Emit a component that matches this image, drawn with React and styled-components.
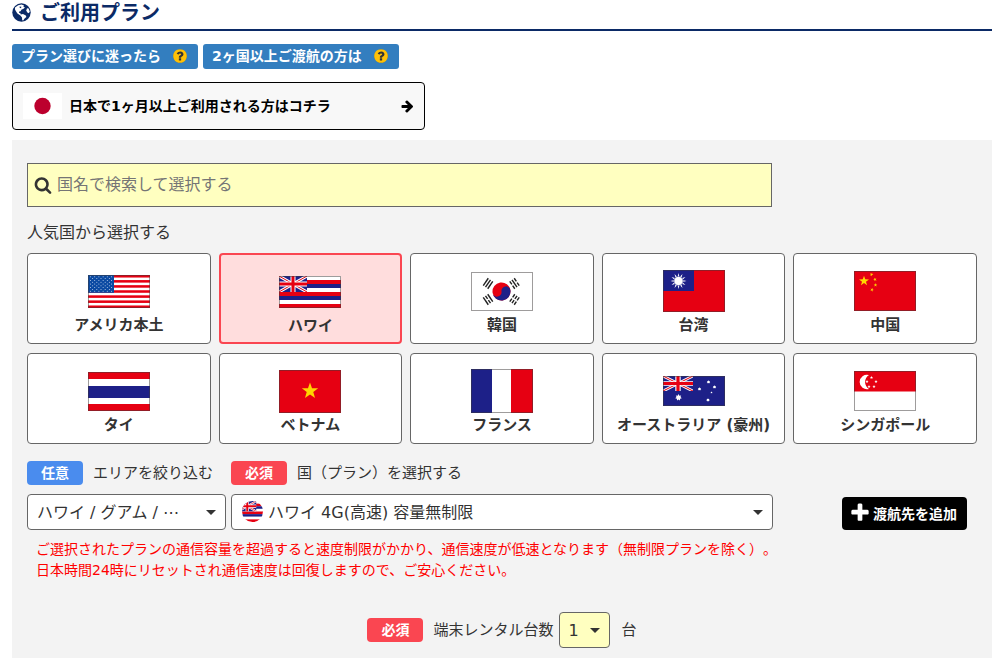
import React, { useState } from 'react';
import styled, { createGlobalStyle } from 'styled-components';

const NAVY = '#0b2a66';
const RED = '#e60012';
const BLUE = '#1d2088';

const points = (cx, cy, outer, inner, count, turn = 0) => {
  const list = [];
  for (let i = 0; i < count * 2; i++) {
    const r = i % 2 ? inner : outer;
    const a = (Math.PI * i) / count - Math.PI / 2 + turn;
    list.push(`${(cx + r * Math.cos(a)).toFixed(2)},${(cy + r * Math.sin(a)).toFixed(2)}`);
  }
  return list.join(' ');
};

function Star({ x, y, r, inner = 0.4, count = 5, turn, fill = '#fff' }) {
  return <polygon points={points(x, y, r, r * inner, count, turn)} fill={fill} />;
}

function UnionJack({ width, height }) {
  return (
    <svg width={width} height={height} viewBox="0 0 28 16" preserveAspectRatio="none">
      <rect width="28" height="16" fill={BLUE} />
      <path d="M0 0L28 16M28 0L0 16" stroke="#fff" strokeWidth="3" />
      <path d="M0 0L28 16M28 0L0 16" stroke={RED} strokeWidth="1" />
      <path d="M14 0V16M0 8H28" stroke="#fff" strokeWidth="5" />
      <path d="M14 0V16M0 8H28" stroke={RED} strokeWidth="3" />
    </svg>
  );
}

function Trigram({ x, y, angle, broken }) {
  return (
    <g transform={`translate(${x} ${y}) rotate(${angle})`} stroke="#222" strokeWidth="1.4">
      {[-2.7, 0, 2.7].map((dy, i) => (
        <path
          key={dy}
          d={broken[i] ? `M-4.5 ${dy}H-.7M.7 ${dy}H4.5` : `M-4.5 ${dy}H4.5`}
        />
      ))}
    </g>
  );
}

function HawaiiStripes() {
  const colors = ['#fff', RED, BLUE, '#fff', RED, BLUE, '#fff', RED];
  return (
    <>
      {colors.map((color, i) => (
        <rect key={i} y={i * 4} width="62" height="4" fill={color} />
      ))}
      <UnionJack width="28" height="16" />
    </>
  );
}

const flags = {
  usa: {
    height: 33,
    art: (
      <>
        <rect width="62" height="33" fill="#fff" />
        {[0, 1, 2, 3, 4, 5, 6].map(i => (
          <rect key={i} y={i * 5.08} width="62" height="2.54" fill={RED} />
        ))}
        <rect width="26" height="17.8" fill="#0b4aa2" />
        {[0, 1, 2, 3, 4, 5, 6, 7, 8].map(row =>
          (row % 2 ? [0, 1, 2, 3, 4] : [0, 1, 2, 3, 4, 5]).map(col => (
            <circle
              key={`${row}-${col}`}
              cx={2.5 + col * 4.2 + (row % 2) * 2.1}
              cy={1.8 + row * 1.8}
              r=".5"
              fill="#c8d8ee"
            />
          ))
        )}
      </>
    ),
  },
  hawaii: { height: 32, art: <HawaiiStripes /> },
  korea: {
    height: 39,
    art: (
      <>
        <rect width="62" height="39" fill="#fff" />
        <g transform="translate(30.5 19.5) rotate(-8)">
          <circle r="9" fill={RED} />
          <path d="M-9 0A4.5 4.5 0 0 0 0 0A4.5 4.5 0 0 1 9 0A9 9 0 0 1 -9 0Z" fill={BLUE} />
        </g>
        <Trigram x="17" y="11.5" angle={-56} broken={[0, 0, 0]} />
        <Trigram x="43.5" y="11.5" angle={56} broken={[1, 0, 1]} />
        <Trigram x="17" y="27.5" angle={56} broken={[0, 1, 0]} />
        <Trigram x="43.5" y="27.5" angle={-56} broken={[1, 1, 1]} />
      </>
    ),
  },
  taiwan: {
    height: 42,
    art: (
      <>
        <rect width="62" height="42" fill={RED} />
        <rect width="31" height="21" fill={BLUE} />
        <Star x={15.5} y={11} r={8} inner={0.5} count={12} />
        <circle cx="15.5" cy="11" r="4.6" fill="#fff" stroke={BLUE} strokeWidth=".6" />
      </>
    ),
  },
  china: {
    height: 40,
    art: (
      <>
        <rect width="62" height="40" fill={RED} />
        <Star x={10} y={10} r={5.2} fill="#ffd900" />
        <Star x={17.5} y={3.5} r={1.9} turn={0.4} fill="#ffd900" />
        <Star x={21} y={8.5} r={1.9} turn={0.8} fill="#ffd900" />
        <Star x={21.5} y={14} r={1.9} fill="#ffd900" />
        <Star x={18} y={18.8} r={1.9} turn={0.4} fill="#ffd900" />
      </>
    ),
  },
  thailand: {
    height: 39,
    art: (
      <>
        <rect width="62" height="39" fill={RED} />
        <rect y="7" width="62" height="25" fill="#fff" />
        <rect y="14" width="62" height="12" fill={BLUE} />
      </>
    ),
  },
  vietnam: {
    height: 43,
    art: (
      <>
        <rect width="62" height="43" fill={RED} />
        <Star x={31} y={21} r={8.6} fill="#ffd400" />
      </>
    ),
  },
  france: {
    height: 44,
    art: (
      <>
        <rect width="62" height="44" fill="#fff" />
        <rect width="21" height="44" fill={BLUE} />
        <rect x="40" width="22" height="44" fill={RED} />
      </>
    ),
  },
  australia: {
    height: 30,
    art: (
      <>
        <rect width="62" height="30" fill={BLUE} />
        <UnionJack width="30" height="15" />
        <Star x={15.5} y={21.5} r={3.4} inner={0.6} count={7} />
        <Star x={36.5} y={13} r={1.8} inner={0.6} count={7} />
        <Star x={45.5} y={6} r={1.8} inner={0.6} count={7} />
        <Star x={51.5} y={11} r={1.8} inner={0.6} count={7} />
        <Star x={48.5} y={16.5} r={1.2} />
        <Star x={45} y={24} r={1.8} inner={0.6} count={7} />
      </>
    ),
  },
  singapore: {
    height: 40,
    art: (
      <>
        <rect width="62" height="40" fill="#fff" />
        <rect width="62" height="20.5" fill={RED} />
        <path d="M15 4A7.3 7.3 0 1 0 15 18A8.2 8.2 0 0 1 15 4Z" fill="#fff" />
        <Star x={17.5} y={6.5} r={1.7} />
        <Star x={13} y={10.5} r={1.7} />
        <Star x={22} y={10.5} r={1.7} />
        <Star x={15} y={15.5} r={1.7} />
        <Star x={20} y={15.5} r={1.7} />
      </>
    ),
  },
};

const countries = [
  { id: 'usa', name: 'アメリカ本土' },
  { id: 'hawaii', name: 'ハワイ' },
  { id: 'korea', name: '韓国' },
  { id: 'taiwan', name: '台湾' },
  { id: 'china', name: '中国' },
  { id: 'thailand', name: 'タイ' },
  { id: 'vietnam', name: 'ベトナム' },
  { id: 'france', name: 'フランス' },
  { id: 'australia', name: 'オーストラリア (豪州)' },
  { id: 'singapore', name: 'シンガポール' },
];

const icons = {
  search: 'M1216 832q0-185-131.5-316.5t-316.5-131.5-316.5 131.5-131.5 316.5 131.5 316.5 316.5 131.5 316.5-131.5 131.5-316.5zm512 832q0 52-38 90t-90 38q-54 0-90-38l-343-342q-179 124-399 124-143 0-273.5-55.5t-225-150-150-225-55.5-273.5 55.5-273.5 150-225 225-150 273.5-55.5 273.5 55.5 225 150 150 225 55.5 273.5q0 220-124 399l343 343q37 37 37 90z',
  plus: 'M1600 736v192q0 40-28 68t-68 28h-416v416q0 40-28 68t-68 28h-192q-40 0-68-28t-28-68v-416h-416q-40 0-68-28t-28-68v-192q0-40 28-68t68-28h416v-416q0-40 28-68t68-28h192q40 0 68 28t28 68v416h416q40 0 68 28t28 68z',
  question: 'M1024 1376v-192q0-14-9-23t-23-9h-192q-14 0-23 9t-9 23v192q0 14 9 23t23 9h192q14 0 23-9t9-23zm256-672q0-88-55.5-163t-138.5-116-170-41q-243 0-371 213-15 24 8 42l132 100q7 6 19 6 16 0 25-12 53-68 86-92 34-24 86-24 48 0 85.5 26t37.5 59q0 38-20 61t-68 45q-63 28-115.5 86.5t-52.5 125.5v36q0 14 9 23t23 9h192q14 0 23-9t9-23q0-19 21.5-49.5t54.5-49.5q32-18 49-28.5t46-35 44.5-48 28-60.5 12.5-81zm384 192q0 209-103 385.5t-279.5 279.5-385.5 103-385.5-103-279.5-279.5-103-385.5 103-385.5 279.5-279.5 385.5-103 385.5 103 279.5 279.5 103 385.5z',
  arrow: 'M1664 960q0 54-37 91l-651 651q-39 37-91 37-51 0-90-37l-75-75q-38-38-38-91t38-91l293-293h-704q-52 0-84.5-37.5t-32.5-90.5v-128q0-53 32.5-90.5t84.5-37.5h704l-293-294q-38-36-38-90t38-90l75-75q38-38 90-38 53 0 91 38l651 651q37 35 37 90z',
};

function Icon({ name, size, className }) {
  return (
    <svg className={className} width={size} height={size} viewBox="0 0 1792 1792" fill="currentColor" aria-hidden="true">
      <path d={icons[name]} />
    </svg>
  );
}

function Globe() {
  return (
    <svg width="19" height="19" viewBox="0 0 19 19" aria-hidden="true">
      <circle cx="9.5" cy="9.5" r="9.2" fill="currentColor" />
      <g fill="#fff">
        <path d="M3 4.6L6.2 2.2L9.6 1.6L12 2.4L11.4 3.8L13 4.6L11.2 6L9.6 6.6L8.6 8.2L7.2 8.4L7 9.8L8.4 10.2L8.8 11.4L11 11L13.8 12.6L14.4 14L12.6 15.6L11.2 17.4L10.2 17.2L10 14.4L8.4 12.4L5.4 10.4L3.8 8L3 6.4Z" />
        <path d="M15 5.2L16.6 5.4L17.8 8.6L16.8 10.2L15 9.2L14.4 7.2Z" />
      </g>
      <path d="M7.6 3.4L9.4 3.8L9 5.2L7.6 4.8Z" fill="currentColor" />
    </svg>
  );
}

function HelpIcon() {
  return (
    <svg width="16" height="16" viewBox="0 0 1792 1792" aria-hidden="true">
      <circle cx="896" cy="896" r="740" fill="#333" />
      <path d={icons.question} fill="#ffc107" />
    </svg>
  );
}

function Flag({ id }) {
  const { height, art } = flags[id];
  return (
    <svg width="62" height={height} viewBox={`0 0 62 ${height}`} aria-hidden="true">
      {art}
      <rect x=".5" y=".5" width="61" height={height - 1} fill="none" stroke="#3e3a39" strokeOpacity=".5" />
    </svg>
  );
}

function App() {
  const [selected, setSelected] = useState('hawaii');

  return (
    <Page>
      <GlobalStyle />
      <Heading>
        <Globe />
        ご利用プラン
      </Heading>
      <HelpLinks>
        <HelpLink href="#">プラン選びに迷ったら<HelpIcon /></HelpLink>
        <HelpLink href="#">2ヶ国以上ご渡航の方は<HelpIcon /></HelpLink>
      </HelpLinks>
      <JapanLink href="#">
        <svg width="39" height="26" viewBox="0 0 39 26" aria-hidden="true">
          <rect width="39" height="26" fill="#fff" />
          <circle cx="19.5" cy="13" r="8.2" fill="#bc002d" />
        </svg>
        <span>日本で1ヶ月以上ご利用される方はコチラ</span>
        <Icon name="arrow" size={14} />
      </JapanLink>

      <Panel>
        <SearchBox>
          <Icon name="search" size={18} />
          <input type="text" aria-label="国名で検索して選択する" placeholder="国名で検索して選択する" />
        </SearchBox>
        <Lead>人気国から選択する</Lead>
        <Countries>
          {countries.map(country => (
            <Country
              key={country.id}
              type="button"
              $active={country.id === selected}
              aria-pressed={country.id === selected}
              onClick={() => setSelected(country.id)}
            >
              <FlagSlot><Flag id={country.id} /></FlagSlot>
              {country.name}
            </Country>
          ))}
        </Countries>

        <PlanRow>
          <AreaField>
            <FieldLabel htmlFor="area"><Badge $optional>任意</Badge>エリアを絞り込む</FieldLabel>
            <SelectWrap>
              <Select id="area">
                <option>ハワイ / グアム / ⋯</option>
              </Select>
              <Caret />
            </SelectWrap>
          </AreaField>
          <PlanField>
            <FieldLabel htmlFor="plan"><Badge>必須</Badge>国（プラン）を選択する</FieldLabel>
            <SelectWrap>
              <Select id="plan" $withFlag>
                <option>ハワイ 4G(高速) 容量無制限</option>
              </Select>
              <RoundFlag width="21" height="21" viewBox="6 0 32 32" aria-hidden="true">
                <HawaiiStripes />
              </RoundFlag>
              <Caret />
            </SelectWrap>
          </PlanField>
          <AddButton type="button"><Icon name="plus" size={22} />渡航先を追加</AddButton>
        </PlanRow>

        <Notice>
          ご選択されたプランの通信容量を超過すると速度制限がかかり、通信速度が低速となります（無制限プランを除く）。<br />
          日本時間24時にリセットされ通信速度は回復しますので、ご安心ください。
        </Notice>

        <CountRow>
          <CountLabel htmlFor="count"><Badge>必須</Badge>端末レンタル台数</CountLabel>
          <CountWrap>
            <Select id="count" $yellow>
              <option>1</option>
              <option>2</option>
              <option>3</option>
            </Select>
            <Caret />
          </CountWrap>
          <span>台</span>
        </CountRow>
      </Panel>
    </Page>
  )
}

function Caret() {
  return (
    <CaretIcon width="10" height="5" viewBox="0 0 10 5" aria-hidden="true">
      <path d="M0 0H10L5 5Z" fill="currentColor" />
    </CaretIcon>
  );
}

export default App

const GlobalStyle = createGlobalStyle`
  * {
    box-sizing: border-box;
  }

  body {
    margin: 0;
    background: #fff;
    color: #333;
    font-family: "DejaVu Sans", "Noto Sans CJK JP", sans-serif;
    font-size: 15px;
    line-height: 22px;
    text-spacing-trim: space-all;
  }

  button, input, select {
    font-family: inherit;
    color: inherit;
  }

  svg {
    flex: none;
  }
`;

const Page = styled.main`
  padding: 0 10px 12px 12px;
`;

const Heading = styled.h1`
  display: flex;
  align-items: center;
  gap: 9px;
  margin: 0;
  height: 31px;
  padding-bottom: 4px;
  border-bottom: 2px solid ${NAVY};
  color: ${NAVY};
  font-size: 20px;
  line-height: 24px;
`;

const HelpLinks = styled.div`
  display: flex;
  gap: 5px;
  margin: 13px 0;
`;

const HelpLink = styled.a`
  display: flex;
  align-items: center;
  gap: 11px;
  height: 25px;
  padding: 0 10px 1px 9px;
  border-radius: 3px;
  background: #337ebf;
  color: #fff;
  font-size: 14px;
  font-weight: 700;
  text-decoration: none;
`;

const JapanLink = styled.a`
  display: flex;
  align-items: center;
  gap: 7px;
  width: 413px;
  max-width: 100%;
  height: 48px;
  padding: 0 10px;
  border: 1px solid #000;
  border-radius: 4px;
  background: #f8f8f8;
  color: #000;
  font-size: 14px;
  font-weight: 700;
  text-decoration: none;

  span {
    flex: 1;
  }
`;

const Panel = styled.section`
  margin-top: 10px;
  padding: 23px 15px 10px;
  background: #f3f3f3;
`;

const SearchBox = styled.label`
  display: flex;
  align-items: center;
  gap: 5px;
  max-width: 745px;
  height: 44px;
  padding: 0 6px 1px;
  border: 1px solid #666;
  background: #ffffc0;

  input {
    flex: 1;
    min-width: 0;
    padding: 0;
    border: 0;
    outline: 0;
    background: transparent;
    font-size: 16px;
  }

  input::placeholder {
    color: #757575;
    opacity: 1;
  }
`;

const Lead = styled.p`
  margin: 15px 0 9px;
  font-size: 16px;
`;

const Countries = styled.div`
  display: grid;
  grid-template-columns: repeat(5, 1fr);
  gap: 9px 8px;
`;

const Country = styled.button`
  display: flex;
  flex-direction: column;
  align-items: center;
  justify-content: flex-end;
  gap: 1px;
  height: 91px;
  padding: 0 0 ${props => props.$active ? 5 : 7}px;
  border: ${props => props.$active ? '2px solid #fa4651' : '1px solid #666'};
  border-radius: 4px;
  background: ${props => props.$active ? '#ffdddd' : '#fff'};
  font-size: 15px;
  font-weight: 700;
  line-height: 22px;
  white-space: nowrap;
  cursor: pointer;
`;

const FlagSlot = styled.span`
  display: flex;
  align-items: center;
  height: 44px;
`;

const PlanRow = styled.div`
  display: flex;
  align-items: flex-end;
  gap: 5px;
  margin-top: 17px;
`;

const AreaField = styled.div`
  flex: 0 1 199px;
`;

const PlanField = styled.div`
  flex: 0 1 542px;
`;

const FieldLabel = styled.label`
  display: flex;
  align-items: center;
  gap: 10px;
  margin-bottom: 9px;
  white-space: nowrap;
`;

const Badge = styled.span`
  width: 56px;
  border-radius: 4px;
  background: ${props => props.$optional ? '#4a8cee' : '#fa4651'};
  color: #fff;
  font-size: 14px;
  font-weight: 700;
  line-height: 24px;
  text-align: center;
`;

const SelectWrap = styled.div`
  position: relative;
`;

const Select = styled.select`
  display: block;
  width: 100%;
  height: 36px;
  padding: 0 28px 0 ${props => props.$withFlag ? 36 : 9}px;
  border: 1px solid #666;
  border-radius: 4px;
  background: ${props => props.$yellow ? '#ffffc0' : '#fff'};
  font-size: 16px;
  appearance: none;
`;

const CaretIcon = styled.svg`
  position: absolute;
  top: 16px;
  right: 10px;
  pointer-events: none;
`;

const RoundFlag = styled.svg`
  position: absolute;
  top: 7px;
  left: 11px;
  border-radius: 50%;
  pointer-events: none;
`;

const AddButton = styled.button`
  display: flex;
  align-items: center;
  gap: 2px;
  height: 33px;
  margin-left: auto;
  margin-right: 10px;
  padding: 0 10px 1px 7px;
  border: 0;
  border-radius: 4px;
  background: #000;
  color: #fff;
  font-size: 14px;
  font-weight: 700;
  white-space: nowrap;
  cursor: pointer;
`;

const Notice = styled.p`
  margin: 9px 0 0;
  padding-left: 9px;
  color: #f00;
  font-size: 14px;
  line-height: 21px;
`;

const CountRow = styled.div`
  display: flex;
  align-items: center;
  justify-content: center;
  margin-top: 31px;
`;

const CountLabel = styled.label`
  display: flex;
  align-items: center;
  gap: 10px;
  margin-right: 5px;
`;

const CountWrap = styled(SelectWrap)`
  width: 51px;
  margin-right: 12px;
`;
